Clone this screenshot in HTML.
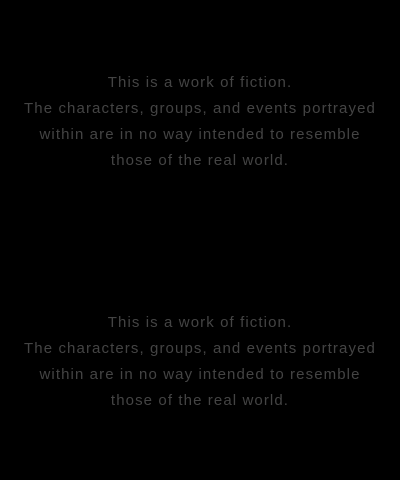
<!DOCTYPE html>
<html><head><meta charset="utf-8"><style>
html,body{margin:0;padding:0;background:#000;width:400px;height:480px;overflow:hidden}
.h{height:240px;display:flex;align-items:center;justify-content:center}
.t{font-family:"Liberation Sans",sans-serif;font-size:15px;line-height:26px;letter-spacing:1.1px;color:#444;text-align:center;white-space:nowrap;position:relative;top:2px}
</style></head><body>
<div class="h"><div class="t">This is a work of fiction.<br>The characters, groups, and events portrayed<br>within are in no way intended to resemble<br>those of the real world.</div></div>
<div class="h"><div class="t">This is a work of fiction.<br>The characters, groups, and events portrayed<br>within are in no way intended to resemble<br>those of the real world.</div></div>
</body></html>
